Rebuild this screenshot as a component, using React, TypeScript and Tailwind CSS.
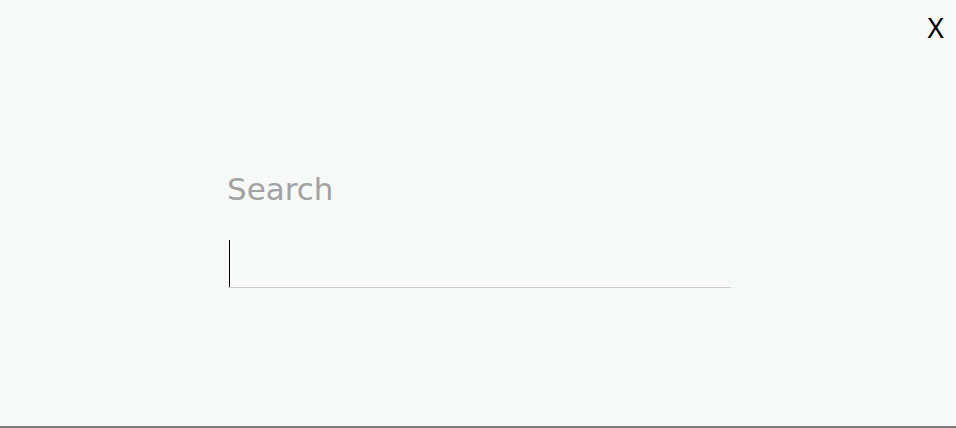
import { useState } from 'react';

export default function App() {
  const [query, setQuery] = useState('');

  return (
    <div className="h-[428px] w-full bg-[#f7f9f8] border-b-2 border-[#7a7a7a] flex flex-col">
      {/* close button row */}
      <div className="h-[50px] flex justify-end items-start pt-[13px] pr-[12px]">
        <button
          type="button"
          className="text-[28px] leading-none text-black font-['Noto_Sans',sans-serif]"
        >
          X
        </button>
      </div>

      <div className="ml-[228px] w-[503px] mt-[121px] flex flex-col">
        <label
          htmlFor="search"
          className="text-[31px] leading-[36px] text-[#a2a2a2] font-['DejaVu_Sans',Verdana,sans-serif] -ml-[1px]"
        >
          Search
        </label>

        <div className="relative mt-[33px] h-[48px] border-b border-[#cccccc] flex items-end">
          <input
            id="search"
            value={query}
            onChange={(e) => setQuery(e.target.value)}
            className="w-full h-[47px] bg-transparent outline-none caret-transparent text-[32px] pl-[1px] text-black font-['DejaVu_Sans',sans-serif]"
          />
          {/* caret */}
          {query === '' && (
            <span className="absolute left-[1px] top-0 h-[47px] w-px bg-black pointer-events-none" />
          )}
        </div>
      </div>
    </div>
  );
}
